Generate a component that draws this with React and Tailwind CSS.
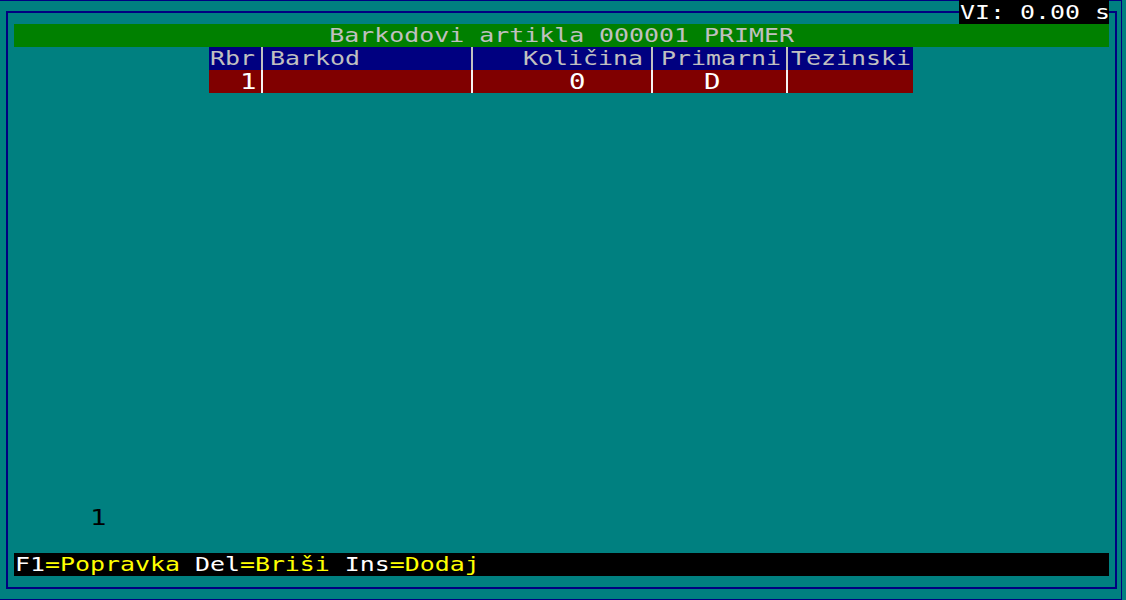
import React from "react";

// console cell is 15px wide: DejaVu Sans Mono 20px (12.04px) stretched
const T = ({ children, className = "", origin = "origin-left" }) => (
  <span className={`inline-block scale-x-[1.245] whitespace-pre ${origin} ${className}`}>
    {children}
  </span>
);

const Sep = ({ light }) => (
  <div className={`w-[2px] self-stretch ${light ? "bg-[#f4f4f4]" : "bg-[#c0c0c0]"}`} />
);

export default function App() {
  return (
    <div className="relative w-[1126px] h-[600px] overflow-hidden bg-[#008080] font-['DejaVu_Sans_Mono','Liberation_Mono',monospace] text-[20px] leading-[23px]">
      <div className="w-[1122px] h-[600px] border-t border-r border-b border-[#000080] pt-[10px] pl-[6px]">
        <div className="w-[1111px] h-[578px] border-2 border-[#000080] flex flex-col px-[6px] pt-[11px] pb-[11px]">
          {/* title */}
          <div className="h-[23px] bg-[#008000] text-[#c0c0c0] text-center">
            <T origin="origin-center">Barkodovi artikla 000001 PRIMER</T>
          </div>

          {/* table */}
          <div className="ml-[195px] w-[704px]">
            <div className="flex h-[23px] bg-[#000080] text-[#c0c0c0]">
              <div className="w-[52px] pl-[1px]">
                <T>Rbr</T>
              </div>
              <Sep />
              <div className="w-[208px] pl-[7px]">
                <T>Barkod</T>
              </div>
              <Sep />
              <div className="w-[178px] pl-[50px]">
                <T>Količina</T>
              </div>
              <Sep />
              <div className="w-[133px] pl-[8px]">
                <T>Primarni</T>
              </div>
              <Sep />
              <div className="w-[125px] pl-[3px]">
                <T>Tezinski</T>
              </div>
            </div>
            <div className="flex h-[23px] bg-[#800000] text-white text-[22px] leading-[23px]">
              <div className="w-[52px] pl-[31px]">
                <T>1</T>
              </div>
              <Sep light />
              <div className="w-[208px]" />
              <Sep light />
              <div className="w-[178px] pl-[96px]">
                <T>0</T>
              </div>
              <Sep light />
              <div className="w-[133px] pl-[51px]">
                <T>D</T>
              </div>
              <Sep light />
              <div className="w-[125px]" />
            </div>
          </div>

          <div className="flex-1" />

          <div className="h-[23px] pl-[76px] text-black text-[22px]">
            <T>1</T>
          </div>

          {/* key help */}
          <div className="mt-[24px] h-[23px] bg-black pl-[1px]">
            <T>
              <span className="text-white">F1</span>
              <span className="text-[#ffff00]">=Popravka</span>
              <span className="text-white"> Del</span>
              <span className="text-[#ffff00]">=Briši</span>
              <span className="text-white"> Ins</span>
              <span className="text-[#ffff00]">=Dodaj</span>
            </T>
          </div>
        </div>
      </div>

      <div className="absolute left-[959px] top-0 w-[150px] h-[24px] bg-black text-white pl-[1px] leading-[24px]">
        <T>VI: 0.00 s</T>
      </div>
    </div>
  );
}
